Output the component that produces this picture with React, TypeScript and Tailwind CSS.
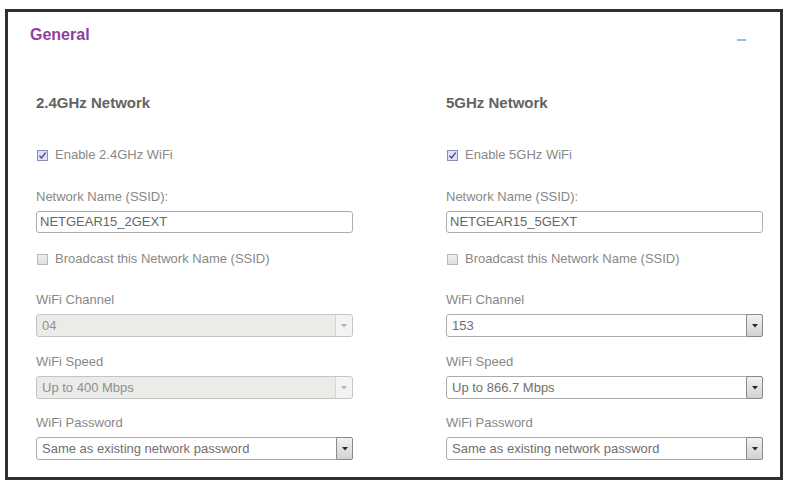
import React from "react";

const font = { fontFamily: '"Liberation Sans", Arial, sans-serif' };

function Checkbox({ checked }: { checked: boolean }) {
  if (checked) {
    return (
      <div className="w-[11px] h-[11px] border border-[#8c8cae] bg-[#dfe0f1] flex items-center justify-center shrink-0">
        <svg width="9" height="9" viewBox="0 0 9 9">
          <path d="M1.5 4.8 L3.6 7 L7.6 1.6" fill="none" stroke="#474b93" strokeWidth="1.4" />
        </svg>
      </div>
    );
  }
  return <div className="w-[11px] h-[11px] border border-[#b8b8b8] bg-gradient-to-b from-[#eeeeee] to-[#dedede] shrink-0" />;
}

function Select({ value, disabled }: { value: string; disabled?: boolean }) {
  return (
    <div
      className={
        "h-[23px] rounded-[3px] border flex items-stretch " +
        (disabled ? "border-[#c4c4c4] bg-[#ebebe8]" : "border-[#adadad] bg-white")
      }
    >
      <div className={"flex-1 flex items-center pl-[5px] text-[13px] " + (disabled ? "text-[#909090]" : "text-[#707070]")}>
        {value}
      </div>
      {disabled ? (
        <div className="w-[17px] border-l border-[#d6d6d6] bg-[#f3f3f3] flex items-center justify-center rounded-r-[2px]">
          <svg width="6" height="4" viewBox="0 0 6 4">
            <path d="M0 0 L6 0 L3 3.5 Z" fill="#b5b5b5" />
          </svg>
        </div>
      ) : (
        <div className="w-[17px] border border-[#8a8a8a] -my-px -mr-px bg-gradient-to-b from-[#f2f2f2] to-[#d2d2d2] flex items-center justify-center rounded-[2px]">
          <svg width="6" height="4" viewBox="0 0 6 4">
            <path d="M0 0 L6 0 L3 3.5 Z" fill="#2a2a2a" />
          </svg>
        </div>
      )}
    </div>
  );
}

function Column({
  title,
  enable,
  ssid,
  channel,
  speed,
  disabled,
}: {
  title: string;
  enable: string;
  ssid: string;
  channel: string;
  speed: string;
  disabled?: boolean;
}) {
  return (
    <div className="flex flex-col">
      <div className="text-[15px] leading-[18px] font-bold text-[#636363]">{title}</div>
      <div className="mt-[35px] h-[16px] flex items-center gap-[7px] pl-[1px]">
        <Checkbox checked />
        <span className="text-[13px] text-[#888]">{enable}</span>
      </div>
      <div className="mt-[26px] h-[16px] leading-[16px] text-[13px] text-[#888]">Network Name (SSID):</div>
      <div className="mt-[6px] h-[22px] rounded-[3px] border border-[#adadad] bg-white flex items-center pl-[3px] text-[13px] text-[#666]">
        {ssid}
      </div>
      <div className="mt-[18px] h-[16px] flex items-center gap-[7px] pl-[1px]">
        <Checkbox checked={false} />
        <span className="text-[13px] text-[#888]">Broadcast this Network Name (SSID)</span>
      </div>
      <div className="mt-[25px] h-[16px] leading-[16px] text-[13px] text-[#888]">WiFi Channel</div>
      <div className="mt-[6px]">
        <Select value={channel} disabled={disabled} />
      </div>
      <div className="mt-[17px] h-[16px] leading-[16px] text-[13px] text-[#888]">WiFi Speed</div>
      <div className="mt-[6px]">
        <Select value={speed} disabled={disabled} />
      </div>
      <div className="mt-[16px] h-[16px] leading-[16px] text-[13px] text-[#888]">WiFi Password</div>
      <div className="mt-[6px]">
        <Select value="Same as existing network password" />
      </div>
    </div>
  );
}

export default function App() {
  return (
    <div className="w-[787px] h-[481px] bg-white overflow-hidden pt-[9px] pl-[5px]" style={font}>
      <div className="w-[778px] h-[471px] border-[3px] border-[#2f2f2f] bg-white">
        <div className="mt-[13px] h-[20px] flex items-center justify-between pl-[22px] pr-[34px]">
          <span className="text-[16px] leading-[20px] font-bold text-[#8e3f9f]">General</span>
          <span className="block w-[9px] h-[2px] bg-[#8ec0e0] mt-[9px]" />
        </div>
        <div className="mt-[49px] pl-[28px] grid grid-cols-[317px_317px] gap-x-[93px]">
          <Column
            title="2.4GHz Network"
            enable="Enable 2.4GHz WiFi"
            ssid="NETGEAR15_2GEXT"
            channel="04"
            speed="Up to 400 Mbps"
            disabled
          />
          <Column
            title="5GHz Network"
            enable="Enable 5GHz WiFi"
            ssid="NETGEAR15_5GEXT"
            channel="153"
            speed="Up to 866.7 Mbps"
          />
        </div>
      </div>
    </div>
  );
}
